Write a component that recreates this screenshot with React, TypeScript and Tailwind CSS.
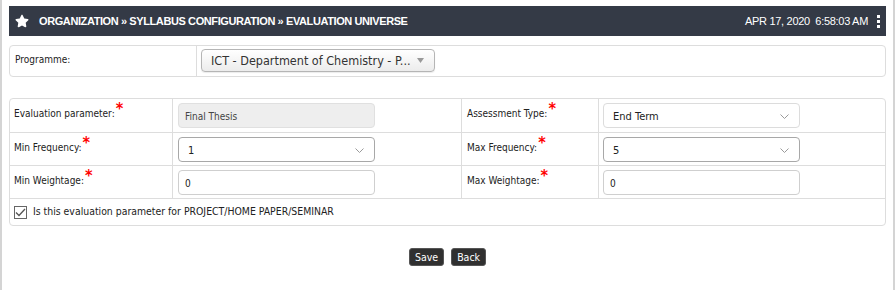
import { FaStar } from "react-icons/fa";

const font = "font-['DejaVu_Sans_Condensed','DejaVu_Sans',sans-serif]";
const label = `${font} text-[10px] text-[#222]`;

function Req() {
  return <span className="text-[#ff0000] text-[16px] font-bold leading-none relative -top-[3px] ml-[1px]">*</span>;
}

function Chevron() {
  return (
    <svg width="9" height="6" viewBox="0 0 9 6" className="absolute right-[10px] top-[10px]">
      <path d="M0.5 0.5 L4.5 4.5 L8.5 0.5" fill="none" stroke="#9a9a9a" strokeWidth="1" />
    </svg>
  );
}

function SelectBox({ value, dark }: { value: string; dark?: boolean }) {
  return (
    <div
      className={`relative h-[25px] w-[197px] rounded-[4px] border bg-white pl-[9px] pt-[5px] ${font} text-[11px] text-[#222] ${
        dark ? "border-[#a8a8a8]" : "border-[#dcdcdc]"
      }`}
    >
      {value}
      <Chevron />
    </div>
  );
}

function TextBox({ value, disabled }: { value: string; disabled?: boolean }) {
  return (
    <div
      className={`h-[25px] w-[197px] rounded-[4px] border pl-[6px] pt-[5px] ${font} text-[10px] ${
        disabled ? "border-[#e0e0e0] bg-[#eeeeee] text-[#444]" : "border-[#cfcfcf] bg-white text-[#222]"
      }`}
    >
      {value}
    </div>
  );
}

export default function App() {
  const cell = "border-r border-b border-[#dddddd]";
  const btn = `h-[18px] px-[5px] rounded-[3px] bg-[#303030] border border-[#555] text-white ${font} text-[10.5px] leading-none`;
  return (
    <div className="w-[895px] h-[290px] bg-white border-l-2 border-r-2 border-[#d4d4d4] px-[7px] pt-[6px]">
      <div className="h-[30px] bg-[#343a46] flex items-center pl-[6px] pr-[6px] text-white">
        <FaStar className="text-[14px] text-white" />
        <span className="ml-[10px] font-['Liberation_Sans',sans-serif] font-bold text-[11px] tracking-[-0.4px]">
          ORGANIZATION » SYLLABUS CONFIGURATION » EVALUATION UNIVERSE
        </span>
        <span className="ml-auto font-['Liberation_Sans',sans-serif] text-[11px] tracking-[-0.3px]">
          APR 17, 2020&nbsp;&nbsp;6:58:03 AM
        </span>
        <span className="ml-[9px] flex flex-col gap-[2px]">
          <span className="block w-[3px] h-[3px] bg-white" />
          <span className="block w-[3px] h-[3px] bg-white" />
          <span className="block w-[3px] h-[3px] bg-white" />
        </span>
      </div>

      <div className="mt-[9px] h-[32px] rounded-[4px] border border-[#dddddd] flex">
        <div className={`w-[187px] border-r border-[#dddddd] pl-[5px] pt-[6px] ${label}`}>Programme:</div>
        <div className="pl-[4px] pt-[3px]">
          <div className={`relative h-[23px] w-[234px] rounded-[4px] border border-[#b5b5b5] bg-gradient-to-b from-white to-[#ececec] pl-[9px] pt-[2px] ${font} text-[12.5px] text-[#333] shadow-[0_1px_1px_rgba(0,0,0,0.08)]`}>
            ICT - Department of Chemistry - P...
            <svg width="7" height="5" viewBox="0 0 7 5" className="absolute right-[10px] top-[8px]">
              <path d="M0 0 L7 0 L3.5 5 Z" fill="#999" />
            </svg>
          </div>
        </div>
      </div>

      <div className="mt-[21px] rounded-[4px] border border-[#dddddd] grid grid-cols-[163px_289px_137px_287px]">
        <div className={`${cell} h-[34px] pl-[4px] pt-[5px] ${label}`}>
          Evaluation parameter:<Req />
        </div>
        <div className={`${cell} pl-[5px] pt-[4px]`}>
          <TextBox value="Final Thesis" disabled />
        </div>
        <div className={`${cell} pl-[5px] pt-[5px] ${label}`}>
          Assessment Type:<Req />
        </div>
        <div className="border-b border-[#dddddd] pl-[4px] pt-[4px]">
          <SelectBox value="End Term" />
        </div>

        <div className={`${cell} h-[33px] pl-[4px] pt-[5px] ${label}`}>
          Min Frequency:<Req />
        </div>
        <div className={`${cell} pl-[5px] pt-[4px]`}>
          <SelectBox value="1" dark />
        </div>
        <div className={`${cell} pl-[5px] pt-[5px] ${label}`}>
          Max Frequency:<Req />
        </div>
        <div className="border-b border-[#dddddd] pl-[4px] pt-[4px]">
          <SelectBox value="5" dark />
        </div>

        <div className={`${cell} h-[33px] pl-[4px] pt-[5px] ${label}`}>
          Min Weightage:<Req />
        </div>
        <div className={`${cell} pl-[5px] pt-[4px]`}>
          <TextBox value="0" />
        </div>
        <div className={`${cell} pl-[5px] pt-[5px] ${label}`}>
          Max Weightage:<Req />
        </div>
        <div className="border-b border-[#dddddd] pl-[4px] pt-[4px]">
          <TextBox value="0" />
        </div>

        <div className={`col-span-4 h-[26px] flex items-center pl-[4px] ${font} text-[10.4px] text-[#222]`}>
          <span className="w-[13px] h-[13px] border border-[#666] flex items-center justify-center mr-[6px]">
            <svg width="11" height="9" viewBox="0 0 11 9">
              <path d="M1 4.5 L4 7.5 L10 1" fill="none" stroke="#555" strokeWidth="1.3" />
            </svg>
          </span>
          Is this evaluation parameter for PROJECT/HOME PAPER/SEMINAR
        </div>
      </div>

      <div className="mt-[22px] flex justify-center gap-[7px]">
        <button className={btn}>Save</button>
        <button className={btn}>Back</button>
      </div>
    </div>
  );
}
